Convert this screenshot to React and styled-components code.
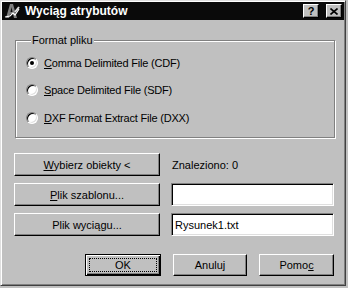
import React from "react";
import styled, { createGlobalStyle } from "styled-components";

const GlobalStyle = createGlobalStyle`
  html, body {
    margin: 0;
    padding: 0;
    background: #c0c0c0;
  }
  body {
    font-family: "Liberation Sans", Arial, sans-serif;
    font-size: 11px;
    color: #000;
  }
`;

const Window = styled.div`
  box-sizing: border-box;
  width: 346px;
  height: 286px;
  padding: 1px;
  background: #c0c0c0;
  border: 1px solid;
  border-color: #dfdfdf #404040 #404040 #dfdfdf;
  box-shadow: inset 1px 1px #fff, inset -1px -1px #808080;
  display: flex;
  flex-direction: column;
`;

const TitleBar = styled.div`
  height: 18px;
  background: #0a0a0a;
  display: flex;
  align-items: center;
  padding: 0 2px 0 2px;
  gap: 5px;
`;

const TitleText = styled.span`
  flex: 1;
  color: #fff;
  font-weight: bold;
  font-size: 12px;
`;

const CaptionButton = styled.div`
  box-sizing: border-box;
  width: 16px;
  height: 14px;
  background: #c0c0c0;
  border: 1px solid;
  border-color: #fff #000 #000 #fff;
  box-shadow: inset -1px -1px #808080;
  display: flex;
  align-items: center;
  justify-content: center;
  margin-left: ${(p) => (p.$gap ? "2px" : "0")};
  font-weight: bold;
  font-size: 11px;
  line-height: 1;
`;

const Body = styled.div`
  flex: 1;
  display: flex;
  flex-direction: column;
  padding: 14px 9px 0 12px;
`;

const Group = styled.fieldset`
  box-sizing: border-box;
  width: 320px;
  height: 104px;
  margin: 0 0 0 1px;
  padding: 2px 0 0 10px;
  border: 1px solid #808080;
  box-shadow: inset 1px 1px #fff, 1px 1px #fff;
  display: flex;
  flex-direction: column;
`;

const Legend = styled.legend`
  padding: 0 1px;
  margin-left: 5px;
  background: #c0c0c0;
  line-height: 13px;
`;

const RadioRow = styled.label`
  display: flex;
  align-items: center;
  gap: 6px;
  height: 27.5px;
  letter-spacing: -0.2px;
`;

const RadioCircle = styled.span`
  box-sizing: border-box;
  width: 12px;
  height: 12px;
  border-radius: 50%;
  border: 1px solid;
  border-color: #808080 #fff #fff #808080;
  background: #fff;
  box-shadow: inset 1px 1px #000, inset -1px -1px #dfdfdf;
  display: flex;
  align-items: center;
  justify-content: center;
  &::after {
    content: "";
    width: 4px;
    height: 4px;
    border-radius: 50%;
    background: ${(p) => (p.$checked ? "#000" : "transparent")};
  }
`;

const Grid = styled.div`
  display: grid;
  grid-template-columns: 146px 163px;
  grid-auto-rows: 23px;
  column-gap: 11px;
  row-gap: 7px;
  margin-top: 15px;
`;

const Button = styled.div`
  box-sizing: border-box;
  height: ${(p) => p.$h || "23px"};
  width: ${(p) => p.$w || "auto"};
  background: #c0c0c0;
  border: 1px solid;
  border-color: ${(p) => (p.$default ? "#000" : "#fff #000 #000 #fff")};
  box-shadow: ${(p) =>
    p.$default
      ? "inset 1px 1px #fff, inset -1px -1px #000, inset -2px -2px #808080"
      : "inset -1px -1px #808080"};
  display: flex;
  align-items: center;
  justify-content: center;
  padding: ${(p) => (p.$default ? "3px" : "0")};
`;

const Focus = styled.span`
  flex: 1;
  align-self: stretch;
  display: flex;
  align-items: center;
  justify-content: center;
  border: 1px dotted #000;
`;

const Found = styled.div`
  display: flex;
  align-items: center;
  padding-left: 1px;
`;

const TextField = styled.div`
  box-sizing: border-box;
  background: #fff;
  border: 1px solid;
  border-color: #808080 #fff #fff #808080;
  box-shadow: inset 1px 1px #000, inset -1px -1px #dfdfdf;
  display: flex;
  align-items: center;
  padding: 0 3px;
`;

const Footer = styled.div`
  display: flex;
  justify-content: flex-end;
  gap: 12px;
  margin-top: 18px;
  width: 320px;
`;

const AppIcon = () => (
  <svg width="16" height="16" viewBox="0 0 16 16">
    <polygon points="2,15 6,1 9,1 13,15 10,15 9,11 6,11 5,15" fill="#808080" />
    <polygon points="6.5,9 7.5,4 8.5,9" fill="#0a0a0a" />
    <path d="M1 14 L6 13 L9 10 L11 12 L15 6" stroke="#fff" strokeWidth="1.2" fill="none" />
    <path d="M11 9 L15 4" stroke="#dfdfdf" strokeWidth="2" fill="none" />
  </svg>
);

export default function App() {
  return (
    <>
      <GlobalStyle />
      <Window>
        <TitleBar>
          <AppIcon />
          <TitleText>Wyciąg atrybutów</TitleText>
          <CaptionButton>?</CaptionButton>
          <CaptionButton $gap>
            <svg width="8" height="7" viewBox="0 0 8 7">
              <path d="M0.5 0.5 L7.5 6.5 M7.5 0.5 L0.5 6.5" stroke="#000" strokeWidth="1.6" />
            </svg>
          </CaptionButton>
        </TitleBar>
        <Body>
          <Group>
            <Legend>Format pliku</Legend>
            <RadioRow>
              <RadioCircle $checked />
              <span>
                <u>C</u>omma Delimited File (CDF)
              </span>
            </RadioRow>
            <RadioRow>
              <RadioCircle />
              <span>
                <u>S</u>pace Delimited File (SDF)
              </span>
            </RadioRow>
            <RadioRow>
              <RadioCircle />
              <span>
                <u>D</u>XF Format Extract File (DXX)
              </span>
            </RadioRow>
          </Group>
          <Grid>
            <Button>
              <span>
                <u>W</u>ybierz obiekty &lt;
              </span>
            </Button>
            <Found>Znaleziono: 0</Found>
            <Button>
              <span>
                <u>P</u>lik szablonu...
              </span>
            </Button>
            <TextField />
            <Button>
              <span>Plik wyciągu...</span>
            </Button>
            <TextField>Rysunek1.txt</TextField>
          </Grid>
          <Footer>
            <Button $default $w="76px" $h="22px">
              <Focus>OK</Focus>
            </Button>
            <Button $w="74px" $h="22px">Anuluj</Button>
            <Button $w="75px" $h="22px">
              <span>
                Pomo<u>c</u>
              </span>
            </Button>
          </Footer>
        </Body>
      </Window>
    </>
  );
}
